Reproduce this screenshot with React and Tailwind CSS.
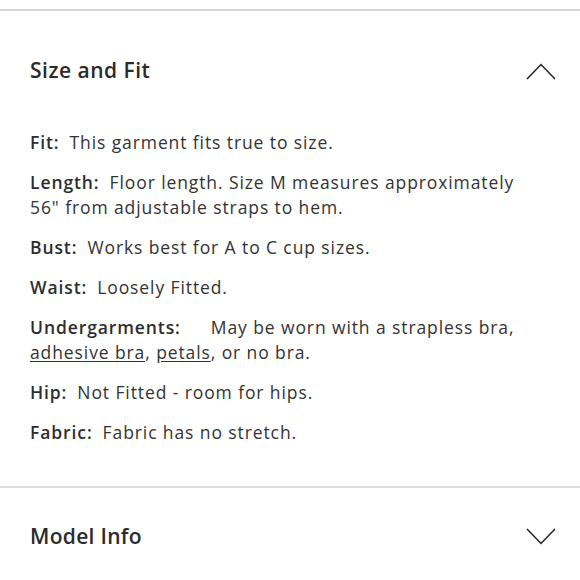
import React from "react";

function ChevronUp() {
  return (
    <svg width="30" height="18" viewBox="0 0 30 18" fill="none">
      <path d="M1 17 L15 2.5 L29 17" stroke="#222" strokeWidth="1.5" />
    </svg>
  );
}
function ChevronDown() {
  return (
    <svg width="30" height="18" viewBox="0 0 30 18" fill="none">
      <path d="M1 1 L15 15.5 L29 1" stroke="#222" strokeWidth="1.5" />
    </svg>
  );
}

function Row({ label, gap = "pl-[10px]", children }) {
  return (
    <p className="leading-[25px]">
      <span className="font-semibold text-[#2e2e2e]">{label}</span>
      <span className={gap}>{children}</span>
    </p>
  );
}

export default function App() {
  return (
    <div className="w-[580px] h-[580px] bg-white overflow-hidden" style={{ fontFamily: "'Open Sans', sans-serif" }}>
      <div className="pt-[9px]">
        <div className="h-[2px] bg-[#d6d6d6]" />
      </div>
      <div className="flex items-center justify-between pl-[30px] pr-[24px] h-[119px]">
        <h2 className="text-[21px] font-semibold text-[#2b2b2b] tracking-[0.5px]">Size and Fit</h2>
        <ChevronUp />
      </div>
      <div className="pl-[30px] pr-[4px] text-[17.5px] text-[#333] flex flex-col gap-[15px] tracking-[0.9px]">
        <Row label="Fit:">This garment fits true to size.</Row>
        <Row label="Length:">Floor length. Size M measures approximately<br />56" from adjustable straps to hem.</Row>
        <Row label="Bust:">Works best for A to C cup sizes.</Row>
        <Row label="Waist:">Loosely Fitted.</Row>
        <Row label="Undergarments:" gap="pl-[30px]">
          May be worn with a strapless bra,<br /><span className="underline underline-offset-2">adhesive bra</span>, <span className="underline underline-offset-2">petals</span>, or no bra.
        </Row>
        <Row label="Hip:">Not Fitted - room for hips.</Row>
        <Row label="Fabric:">Fabric has no stretch.</Row>
      </div>
      <div className="mt-[41px] h-[2px] bg-[#e0e0e0]" />
      <div className="flex items-center justify-between pl-[30px] pr-[24px] h-[98px]">
        <h2 className="text-[21px] font-semibold text-[#2b2b2b] tracking-[0.3px]">Model Info</h2>
        <ChevronDown />
      </div>
    </div>
  );
}
